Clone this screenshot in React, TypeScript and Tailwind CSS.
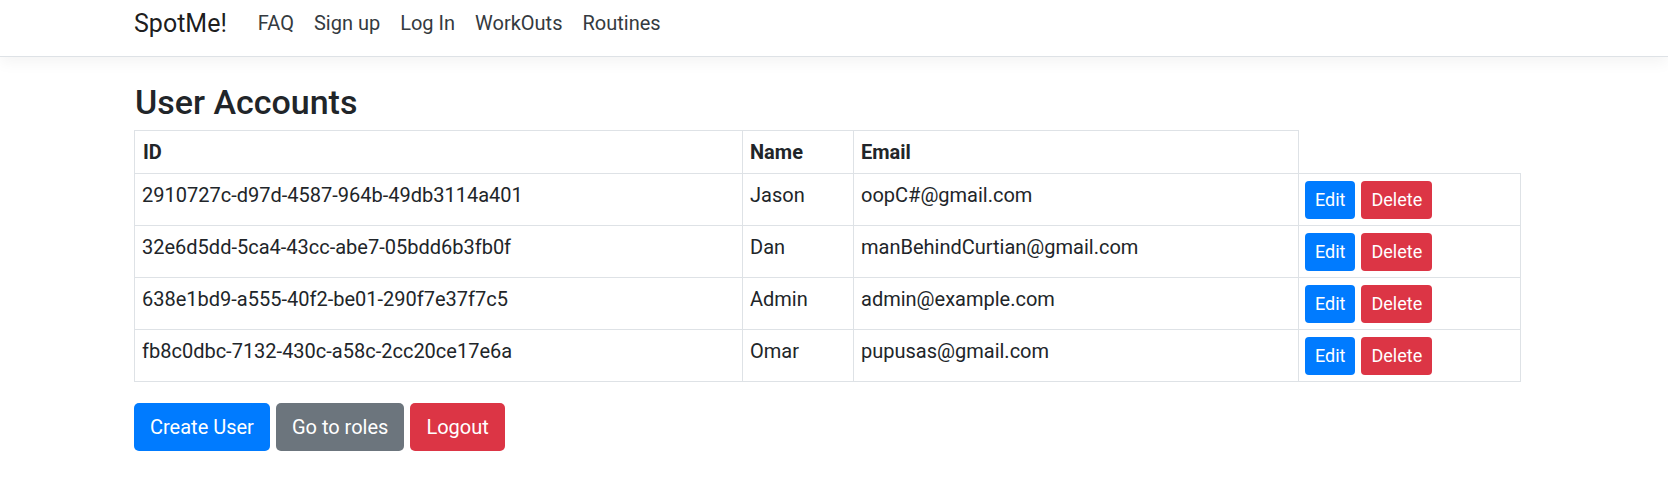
import React from "react";

const rows = [
  { id: "2910727c-d97d-4587-964b-49db3114a401", name: "Jason", email: "oopC#@gmail.com" },
  { id: "32e6d5dd-5ca4-43cc-abe7-05bdd6b3fb0f", name: "Dan", email: "manBehindCurtian@gmail.com" },
  { id: "638e1bd9-a555-40f2-be01-290f7e37f7c5", name: "Admin", email: "admin@example.com" },
  { id: "fb8c0dbc-7132-430c-a58c-2cc20ce17e6a", name: "Omar", email: "pupusas@gmail.com" },
];

export default function App() {
  return (
    <div className="min-h-[479px] bg-white text-[#212529] font-['Roboto',sans-serif] text-[20px] leading-[30px]">
      <nav className="h-[57px] bg-white border-b border-[#dee2e6] shadow-[0_5px_15px_rgba(0,0,0,0.05)]">
        <div className="pl-[134px] h-[56px] flex items-start pt-[5px]">
          <span className="text-[25px] leading-[37px] text-[rgba(0,0,0,0.9)] mr-[21px]">SpotMe!</span>
          <div className="flex items-center text-[#343a40] mt-[3px]">
            <span className="px-[10px]">FAQ</span>
            <span className="px-[10px]">Sign up</span>
            <span className="px-[10px]">Log In</span>
            <span className="px-[10px]">WorkOuts</span>
            <span className="px-[10px]">Routines</span>
          </div>
        </div>
      </nav>
      <main className="pl-[134px] pt-[25px]">
        <h3 className="text-[34px] leading-[41px] font-medium text-[#212529] mb-[7px] pl-[1px]">User Accounts</h3>
        <table className="table-fixed border-collapse w-[1386px] mb-[21px]">
          <colgroup>
            <col className="w-[608px]" />
            <col className="w-[111px]" />
            <col className="w-[445px]" />
            <col className="w-[222px]" />
          </colgroup>
          <thead>
            <tr>
              <th className="border border-[#dee2e6] p-[6px] pl-[8px] text-left align-top font-bold">ID</th>
              <th className="border border-[#dee2e6] p-[6px] pl-[7px] text-left align-top font-bold">Name</th>
              <th className="border border-[#dee2e6] p-[6px] pl-[7px] text-left align-top font-bold">Email</th>
            </tr>
          </thead>
          <tbody>
            {rows.map((r) => (
              <tr key={r.id}>
                <td className="border border-[#dee2e6] p-[6px] pl-[7px] align-top">{r.id}</td>
                <td className="border border-[#dee2e6] p-[6px] pl-[7px] align-top">{r.name}</td>
                <td className="border border-[#dee2e6] p-[6px] pl-[7px] align-top">{r.email}</td>
                <td className="border border-[#dee2e6] pt-[7px] pb-[6px] px-[6px] align-top">
                  <div className="flex gap-[6px]">
                    <button className="h-[38px] px-[10px] rounded-[4px] bg-[#007bff] text-white text-[18px] leading-[26px]">Edit</button>
                    <button className="h-[38px] px-[10px] rounded-[4px] bg-[#dc3545] text-white text-[18px] leading-[26px]">Delete</button>
                  </div>
                </td>
              </tr>
            ))}
          </tbody>
        </table>
        <div className="flex gap-[6px]">
          <button className="h-[48px] px-[16px] rounded-[5px] bg-[#007bff] text-white text-[20px]">Create User</button>
          <button className="h-[48px] px-[16px] rounded-[5px] bg-[#6c757d] text-white text-[20px]">Go to roles</button>
          <button className="h-[48px] px-[16px] rounded-[5px] bg-[#dc3545] text-white text-[20px]">Logout</button>
        </div>
      </main>
    </div>
  );
}
